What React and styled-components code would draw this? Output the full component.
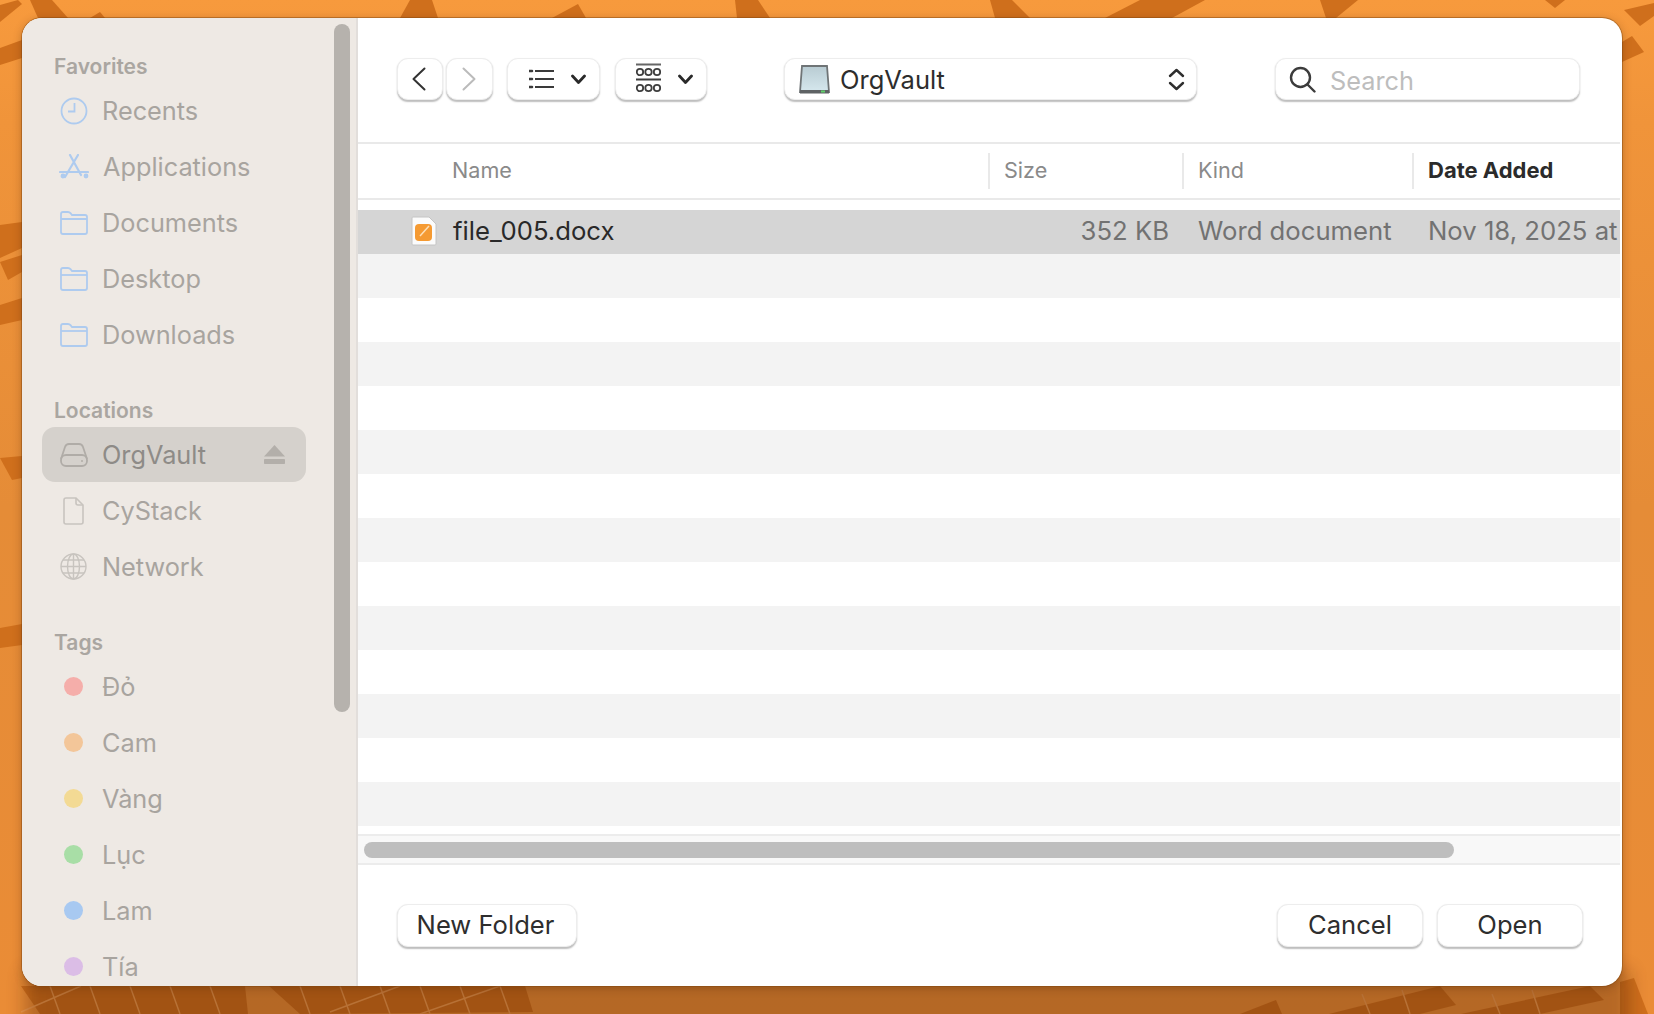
import React from 'react'
import styled, { createGlobalStyle } from 'styled-components'

const GlobalStyle = createGlobalStyle`
    html, body {
        margin: 0;
        padding: 0;
        background: #f2913a;
    }
    * {
        box-sizing: border-box;
    }
`

const Page = styled.div`
    position: relative;
    width: 1654px;
    height: 1014px;
    padding: 18px 32px 28px 22px;
    overflow: hidden;
    background: linear-gradient(180deg, #f79a3d 0%, #f0943a 12%, #e58c37 50%, #ea8c36 100%);
    font-family: Inter, 'Noto Sans', 'Liberation Sans', sans-serif;
`

const Wallpaper = styled.svg`
    position: absolute;
    top: 0;
    left: 0;
    width: 1654px;
    height: 1014px;
`

const Dialog = styled.div`
    position: relative;
    display: flex;
    width: 1600px;
    height: 968px;
    background: #fff;
    border-radius: 20px;
    overflow: hidden;
    box-shadow: 0 0 0 1px rgba(130, 70, 15, 0.45), 0 2px 10px rgba(60, 25, 0, 0.3);
`

const Sidebar = styled.aside`
    position: relative;
    flex: 0 0 336px;
    padding-top: 34px;
    background: #eee9e4;
    border-right: 2px solid #e2dedb;
    overflow: hidden;
`

const SidebarThumb = styled.div`
    position: absolute;
    top: 6px;
    left: 312px;
    width: 16px;
    height: 688px;
    background: #b6b2ad;
    border-radius: 8px;
`

const Section = styled.section`
    margin-bottom: 34px;
`

const SectionTitle = styled.div`
    height: 28px;
    margin-bottom: 3px;
    padding-left: 32px;
    font-size: 21px;
    font-weight: 600;
    line-height: 30px;
    color: #aaa6a1;
`

const Item = styled.div`
    display: flex;
    align-items: center;
    width: 264px;
    height: 55px;
    margin: 0 0 1px 20px;
    padding: 0 21px 0 17px;
    background: ${({ $active }) => ($active ? '#d5d1cc' : 'transparent')};
    border-radius: 13px;
    font-size: 25.3px;
    color: ${({ $active }) => ($active ? '#8e8b87' : '#a8a49f')};
`

const ItemIcon = styled.span`
    display: flex;
    flex: 0 0 29px;
    justify-content: center;
    margin-right: 14px;
`

const ItemLabel = styled.span`
    flex: 1;
`

const Dot = styled.span`
    width: 19px;
    height: 19px;
    border-radius: 50%;
    background: ${({ $color }) => $color};
`

const Main = styled.main`
    display: flex;
    flex: 1;
    flex-direction: column;
    min-width: 0;
`

const Toolbar = styled.div`
    display: flex;
    flex: 0 0 124px;
    align-items: center;
    padding: 0 0 2px 39px;
`

const ToolButton = styled.div`
    display: flex;
    align-items: center;
    justify-content: ${({ $spread }) => ($spread ? 'space-between' : 'center')};
    width: ${({ $w }) => $w}px;
    height: 42px;
    margin-left: ${({ $gap }) => $gap || 0}px;
    padding: ${({ $spread, $pl }) => ($spread ? `0 13px 0 ${$pl}px` : '0 2px 0 0')};
    background: #fff;
    border: 1px solid #ededed;
    border-radius: 11px;
    box-shadow: 0 1.5px 1.5px rgba(0, 0, 0, 0.26);
`

const PathPopup = styled(ToolButton)`
    justify-content: flex-start;
    padding: 0 11px 0 14px;
    font-size: 25.5px;
    color: #2d2d2d;
`

const PopupLabel = styled.span`
    flex: 1;
    margin-left: 10px;
`

const SearchBox = styled(ToolButton)`
    justify-content: flex-start;
    padding: 0 13px;
    font-size: 25.3px;
    color: #bdbdbd;
`

const SearchLabel = styled.span`
    margin-left: 14px;
    padding-top: 3px;
`

const columns = '630px 194px 230px 1fr'

const Header = styled.div`
    display: grid;
    grid-template-columns: ${columns};
    align-items: center;
    height: 58px;
    margin-right: 2px;
    border-top: 2px solid #e9e9e9;
    border-bottom: 2px solid #e9e9e9;
`

const HeaderCell = styled.div`
    height: 36px;
    padding-left: ${({ $first }) => ($first ? '94px' : '14px')};
    border-left: ${({ $first }) => ($first ? 'none' : '2px solid #e9e9e9')};
    font-size: ${({ $sorted }) => ($sorted ? '22px' : '21.6px')};
    font-weight: ${({ $sorted }) => ($sorted ? 700 : 400)};
    line-height: 34px;
    color: ${({ $sorted }) => ($sorted ? '#2b2b2b' : '#8a8a8a')};
`

const List = styled.div`
    flex: 0 0 634px;
    padding: 10px 2px 8px 0;
`

const Row = styled.div`
    display: grid;
    grid-template-columns: ${columns};
    align-items: center;
    height: 44px;
    padding-bottom: 3px;
    background: ${({ $bg }) => $bg};
    font-size: 25.7px;
    color: #727272;
    overflow: hidden;
`

const NameCell = styled.div`
    display: flex;
    align-items: center;
    padding-left: 53px;
    color: #292929;
`

const FileName = styled.span`
    margin-left: 16px;
`

const SizeCell = styled.div`
    padding-right: 13px;
    text-align: right;
`

const TextCell = styled.div`
    padding-left: 16px;
    white-space: nowrap;
`

const ScrollTrack = styled.div`
    flex: 0 0 31px;
    margin-right: 2px;
    padding: 6px 0 0 6px;
    background: #f8f8f8;
    border-top: 2px solid #ececec;
    border-bottom: 2px solid #ececec;
`

const ScrollThumb = styled.div`
    width: 1090px;
    height: 16px;
    background: #bebebe;
    border-radius: 8px;
`

const Footer = styled.div`
    display: flex;
    flex: 1;
    align-items: flex-start;
    gap: 14px;
    padding: 39px 39px 0;
`

const PushButton = styled.div`
    width: ${({ $w }) => $w}px;
    height: 43px;
    margin-right: ${({ $push }) => ($push ? 'auto' : '0')};
    padding-right: ${({ $push }) => ($push ? '3px' : '0')};
    background: #fff;
    border: 1px solid #ededed;
    border-radius: 11px;
    box-shadow: 0 1.5px 1.5px rgba(0, 0, 0, 0.26);
    font-size: 25.6px;
    line-height: 40px;
    text-align: center;
    color: #2e2e2e;
`

const shapes = [
    '30,0 52,0 68,18 38,18',
    '0,5 18,0 22,4 0,22',
    '90,18 100,12 105,18',
    '410,0 432,0 438,18 400,18',
    '552,18 578,4 586,18',
    '735,0 758,0 770,18 737,18',
    '990,0 1012,0 1030,18 995,18',
    '1105,18 1140,0 1205,0 1172,18',
    '1320,0 1358,0 1336,18 1326,18',
    '1545,0 1565,0 1555,8',
    '1624,10 1654,3 1654,16 1640,26',
    '1622,42 1632,36 1644,52 1622,62',
    '1620,982 1634,978 1648,1014 1620,1014',
    '0,48 22,40 22,58 0,65',
    '0,225 22,222 22,248 0,258',
    '0,262 22,255 22,272 8,280',
    '0,305 22,298 22,320 0,325',
    '0,458 22,456 22,478 12,480',
    '0,628 22,624 22,645 0,648',
    '21,986 245,986 248,1014 40,1014',
    '269,986 525,986 533,1012 300,1014',
    '1240,1014 1276,1000 1282,1014',
    '1329,1014 1440,986 1456,1005 1420,1014',
    '1461,1014 1590,986 1604,1000 1540,1014',
]

const gridLines = [
    'M50 986l10 28M90 986l10 28M130 986l10 28M170 986l10 28M210 986l10 28',
    'M300 986l10 28M340 986l10 28M380 986l10 28M420 986l10 28M460 986l10 28M500 986l10 28',
    'M21 1012l60-26M330 1012l70-26M420 1014l80-28',
    'M1370 1014l-8-20M1410 1014l-8-24M1500 1014l-8-20M1540 1014l-8-24',
]

const ClockIcon = () => (
    <svg width="28" height="28" viewBox="0 0 28 28" fill="none" stroke="#aecbef" strokeWidth="1.8">
        <circle cx="14" cy="14" r="12.5" />
        <path d="M14.5 6v8.5H8" />
    </svg>
)

const AppsIcon = () => (
    <svg width="30" height="26" viewBox="0 0 30 26" fill="none" stroke="#aecbef" strokeWidth="2.2" strokeLinecap="round">
        <path d="M11 1l11 20M19 1L6 23M1 18h28" />
        <circle cx="4" cy="22" r="1.3" />
        <circle cx="27" cy="22" r="1.3" />
    </svg>
)

const FolderIcon = () => (
    <svg width="28" height="24" viewBox="0 0 28 24" fill="none" stroke="#aecbef" strokeWidth="1.8">
        <path d="M1 5.5V3q0-2 2-2h5q1.500 0 2.500 1.200L12 4h13q2 0 2 2v15q0 2-2 2H3q-2 0-2-2z" />
        <path d="M1 8h26" />
    </svg>
)

const DiskIcon = () => (
    <svg width="28" height="24" viewBox="0 0 28 24" fill="none" stroke="#b0aca7" strokeWidth="1.8">
        <path d="M1 16L5 4q1-3 4-3h10q3 0 4 3l4 12" />
        <rect x="1" y="12" width="26" height="11" rx="5" />
        <circle cx="22" cy="18" r="1" fill="#b0aca7" stroke="none" />
    </svg>
)

const DocIcon = () => (
    <svg width="21" height="28" viewBox="0 0 21 28" fill="none" stroke="#c8c4bf" strokeWidth="1.6">
        <path d="M3 1h10l7 7v17q0 2-2 2H3q-2 0-2-2V3q0-2 2-2z" />
        <path d="M13 1v5q0 2 2 2h5" />
    </svg>
)

const GlobeIcon = () => (
    <svg width="27" height="27" viewBox="0 0 27 27" fill="none" stroke="#c8c4bf" strokeWidth="1.4">
        <circle cx="13.500" cy="13.500" r="12.500" />
        <ellipse cx="13.500" cy="13.500" rx="6" ry="12.500" />
        <path d="M13.500 1v25M3 7h21M1 13.500h25M3 20h21" />
    </svg>
)

const EjectIcon = () => (
    <svg width="21" height="19" viewBox="0 0 21 19">
        <path d="M10.500 0L21 11.500H0z" fill="#b3afaa" />
        <rect y="14" width="21" height="5" rx="0.800" fill="#b3afaa" />
    </svg>
)

const ChevronLeft = () => (
    <svg width="14" height="24" viewBox="0 0 14 24" fill="none" stroke="#333" strokeWidth="2" strokeLinecap="round" strokeLinejoin="round">
        <path d="M12.500 1.500L1.500 12l11 10.500" />
    </svg>
)

const ChevronRight = () => (
    <svg width="14" height="24" viewBox="0 0 14 24" fill="none" stroke="#bbb" strokeWidth="2" strokeLinecap="round" strokeLinejoin="round">
        <path d="M1.500 1.500L12.500 12l-11 10.500" />
    </svg>
)

const ChevronDown = () => (
    <svg width="15" height="11" viewBox="0 0 15 11" fill="none" stroke="#2a2a2a" strokeWidth="2.8" strokeLinecap="round" strokeLinejoin="round">
        <path d="M1.500 2l6 6.500 6-6.500" />
    </svg>
)

const ListIcon = () => (
    <svg width="25" height="20" viewBox="0 0 25 20" fill="none" stroke="#3a3a3a" strokeWidth="2">
        <path d="M6 2h19M6 10h19M6 18h19" />
        <path d="M0.500 2h2.500M0.500 10h2.500M0.500 18h2.500" strokeWidth="2.600" strokeLinecap="round" />
    </svg>
)

const GroupIcon = () => (
    <svg width="27" height="33" viewBox="0 0 27 33" fill="none" stroke="#3e3e3e" strokeWidth="1.8">
        <path d="M1 1.500h25" stroke="#666" />
        <path d="M1 16.500h25" />
        <circle cx="5" cy="9" r="3.200" />
        <circle cx="13.500" cy="9" r="3.200" />
        <circle cx="22" cy="9" r="3.200" />
        <circle cx="5" cy="25" r="3.200" />
        <circle cx="13.500" cy="25" r="3.200" />
        <circle cx="22" cy="25" r="3.200" />
    </svg>
)

const VolumeIcon = () => (
    <svg width="31" height="29" viewBox="0 0 31 29">
        <defs>
            <linearGradient id="volumeFace" x1="0" y1="0" x2="0" y2="1">
                <stop offset="0" stopColor="#b8cbd2" />
                <stop offset="1" stopColor="#d6e8ee" />
            </linearGradient>
        </defs>
        <path d="M3 1h25l2 26H1z" fill="url(#volumeFace)" stroke="#6f7476" strokeWidth="1.800" />
        <rect x="1" y="25" width="29" height="3.500" fill="#5e6264" />
        <rect x="22" y="25.500" width="4" height="2" fill="#5fd06a" />
    </svg>
)

const StepperIcon = () => (
    <svg width="17" height="23" viewBox="0 0 17 23" fill="none" stroke="#2f2f2f" strokeWidth="2.400" strokeLinecap="round" strokeLinejoin="round">
        <path d="M2 8l6.500-6 6.500 6M2 15l6.500 6 6.500-6" />
    </svg>
)

const SearchIcon = () => (
    <svg width="27" height="27" viewBox="0 0 27 27" fill="none" stroke="#3c3c3c" strokeWidth="2.400" strokeLinecap="round">
        <circle cx="11.500" cy="11.500" r="9.500" />
        <path d="M18.500 18.500l7 7" />
    </svg>
)

const WordFileIcon = () => (
    <svg width="26" height="30" viewBox="0 0 26 30">
        <path d="M2 1h16l7 7v20q0 1-1 1H2q-1 0-1-1V2q0-1 1-1z" fill="#fbfbfb" stroke="#c4c4c4" />
        <rect x="4" y="8" width="17" height="17" rx="4" fill="#f59a32" />
        <path d="M9 20l9-10" stroke="#fde0b8" strokeWidth="1.500" />
    </svg>
)

const favorites = [
    { label: 'Recents', icon: <ClockIcon /> },
    { label: 'Applications', icon: <AppsIcon /> },
    { label: 'Documents', icon: <FolderIcon /> },
    { label: 'Desktop', icon: <FolderIcon /> },
    { label: 'Downloads', icon: <FolderIcon /> },
]

const tags = [
    { label: 'Đỏ', color: '#f5aeaa' },
    { label: 'Cam', color: '#f3c699' },
    { label: 'Vàng', color: '#f3da94' },
    { label: 'Lục', color: '#a8dea6' },
    { label: 'Lam', color: '#a8c9f1' },
    { label: 'Tía', color: '#dbbde6' },
]

const stripes = Array.from({ length: 13 }, (_, i) => (i % 2 === 0 ? '#f3f3f3' : '#ffffff'))

const App = () => (
    <Page>
        <GlobalStyle />
        <Wallpaper viewBox="0 0 1654 1014">
            <defs>
                <filter id="windowShade" x="-10%" y="-100%" width="120%" height="300%">
                    <feGaussianBlur stdDeviation="9" />
                </filter>
            </defs>
            {shapes.map((points) => (
                <polygon key={points} points={points} fill="#cf6f1c" />
            ))}
            {gridLines.map((d) => (
                <path key={d} d={d} stroke="#ee9a4e" strokeWidth="1.500" fill="none" />
            ))}
            <rect x="24" y="970" width="1606" height="90" fill="#3c1900" opacity="0.3" filter="url(#windowShade)" />
        </Wallpaper>
        <Dialog>
            <Sidebar>
                <SidebarThumb />
                <Section>
                    <SectionTitle>Favorites</SectionTitle>
                    {favorites.map((item) => (
                        <Item key={item.label}>
                            <ItemIcon>{item.icon}</ItemIcon>
                            <ItemLabel>{item.label}</ItemLabel>
                        </Item>
                    ))}
                </Section>
                <Section>
                    <SectionTitle>Locations</SectionTitle>
                    <Item $active>
                        <ItemIcon><DiskIcon /></ItemIcon>
                        <ItemLabel>OrgVault</ItemLabel>
                        <EjectIcon />
                    </Item>
                    <Item>
                        <ItemIcon><DocIcon /></ItemIcon>
                        <ItemLabel>CyStack</ItemLabel>
                    </Item>
                    <Item>
                        <ItemIcon><GlobeIcon /></ItemIcon>
                        <ItemLabel>Network</ItemLabel>
                    </Item>
                </Section>
                <Section>
                    <SectionTitle>Tags</SectionTitle>
                    {tags.map((tag) => (
                        <Item key={tag.label}>
                            <ItemIcon><Dot $color={tag.color} /></ItemIcon>
                            <ItemLabel>{tag.label}</ItemLabel>
                        </Item>
                    ))}
                </Section>
            </Sidebar>
            <Main>
                <Toolbar>
                    <ToolButton $w={46}><ChevronLeft /></ToolButton>
                    <ToolButton $w={47} $gap={3}><ChevronRight /></ToolButton>
                    <ToolButton $w={93} $gap={14} $spread $pl={21}><ListIcon /><ChevronDown /></ToolButton>
                    <ToolButton $w={92} $gap={15} $spread $pl={19}><GroupIcon /><ChevronDown /></ToolButton>
                    <PathPopup $w={413} $gap={77}>
                        <VolumeIcon />
                        <PopupLabel>OrgVault</PopupLabel>
                        <StepperIcon />
                    </PathPopup>
                    <SearchBox $w={305} $gap={78}>
                        <SearchIcon />
                        <SearchLabel>Search</SearchLabel>
                    </SearchBox>
                </Toolbar>
                <Header>
                    <HeaderCell $first>Name</HeaderCell>
                    <HeaderCell>Size</HeaderCell>
                    <HeaderCell>Kind</HeaderCell>
                    <HeaderCell $sorted>Date Added</HeaderCell>
                </Header>
                <List>
                    <Row $bg="#d5d5d5">
                        <NameCell>
                            <WordFileIcon />
                            <FileName>file_005.docx</FileName>
                        </NameCell>
                        <SizeCell>352 KB</SizeCell>
                        <TextCell>Word document</TextCell>
                        <TextCell>Nov 18, 2025 at</TextCell>
                    </Row>
                    {stripes.map((bg, i) => (
                        <Row key={i} $bg={bg} />
                    ))}
                </List>
                <ScrollTrack>
                    <ScrollThumb />
                </ScrollTrack>
                <Footer>
                    <PushButton $w={180} $push>New Folder</PushButton>
                    <PushButton $w={146}>Cancel</PushButton>
                    <PushButton $w={146}>Open</PushButton>
                </Footer>
            </Main>
        </Dialog>
    </Page>
)

export default App
